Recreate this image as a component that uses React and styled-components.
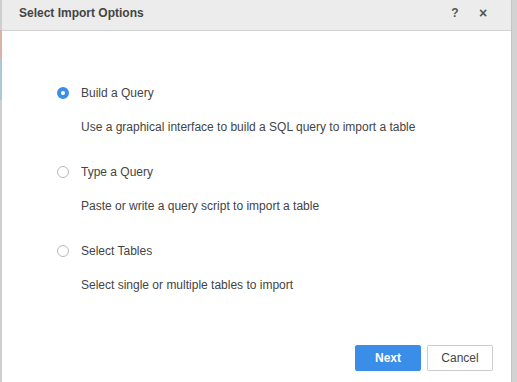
import styled, { createGlobalStyle } from "styled-components"

const Global = createGlobalStyle`
    html, body {
        margin: 0;
        padding: 0;
        background: #d3d3d3;
    }
    body {
        font-family: "Liberation Sans", Arial, sans-serif;
        color: #444;
    }
`

const options = [
    { id: 'build', label: 'Build a Query', desc: 'Use a graphical interface to build a SQL query to import a table', checked: true },
    { id: 'type', label: 'Type a Query', desc: 'Paste or write a query script to import a table' },
    { id: 'tables', label: 'Select Tables', desc: 'Select single or multiple tables to import' },
]

const App = () => {
    return (
        <Page>
            <Global />
            <Edge />
            <Dialog>
                <TitleBar>
                    <Title>Select Import Options</Title>
                    <Tools>
                        <ToolButton>?</ToolButton>
                        <ToolButton $close>×</ToolButton>
                    </Tools>
                </TitleBar>
                <Body>
                    {options.map(o => (
                        <Option key={o.id}>
                            <Row>
                                <Radio $checked={o.checked} />
                                <Label>{o.label}</Label>
                            </Row>
                            <Desc>{o.desc}</Desc>
                        </Option>
                    ))}
                </Body>
                <Footer>
                    <Button $primary>Next</Button>
                    <Button>Cancel</Button>
                </Footer>
            </Dialog>
        </Page>
    )
}

export default App

const Page = styled.div`
    display: flex;
    height: 100vh;
    padding-right: 5px;
    box-sizing: border-box;
`
const Edge = styled.div`
    width: 2px;
    background: linear-gradient(#cfcfcf 0 30px, #d9b3a6 30px 60px, #a9c8dc 60px 100px, #cfcfcf 100px);
`
const Dialog = styled.div`
    flex: 1;
    display: flex;
    flex-direction: column;
    background: #fff;
    border-right: 1px solid #c4c4c4;
`
const TitleBar = styled.div`
    height: 31px;
    box-sizing: border-box;
    display: flex;
    align-items: center;
    justify-content: space-between;
    background: #ececec;
    border-bottom: 1px solid #d2d2d2;
    padding: 0 22px 4px 17px;
    margin-bottom: 1px;
`
const Title = styled.h1`
    margin: 0;
    font-size: 12px;
    font-weight: bold;
    color: #444;
`
const Tools = styled.div`
    display: flex;
    align-items: center;
    gap: 16px;
`
const ToolButton = styled.span`
    font-size: ${p => p.$close ? '14px' : '12px'};
    font-weight: bold;
    color: #555;
    width: 12px;
    text-align: center;
    line-height: 14px;
`
const Body = styled.div`
    padding: 53px 0 0 55px;
    display: flex;
    flex-direction: column;
    gap: 29px;
`
const Option = styled.div`
    display: flex;
    flex-direction: column;
    gap: 18px;
`
const Row = styled.div`
    display: flex;
    align-items: center;
    gap: 12px;
    height: 16px;
`
const Radio = styled.span`
    width: 12px;
    height: 12px;
    border-radius: 50%;
    box-sizing: border-box;
    border: ${p => p.$checked ? '4px solid #3a8ee8' : '1px solid #b8b8b8'};
    background: #fff;
`
const Label = styled.span`
    font-size: 12px;
    line-height: 16px;
    color: #444;
`
const Desc = styled.div`
    font-size: 12px;
    line-height: 16px;
    padding-left: 24px;
    color: #444;
`
const Footer = styled.div`
    margin-top: auto;
    display: flex;
    justify-content: flex-end;
    gap: 6px;
    padding: 0 18px 11px 0;
`
const Button = styled.button`
    width: 66px;
    height: 26px;
    font-family: "Liberation Sans", Arial, sans-serif;
    font-size: 12px;
    font-weight: ${p => p.$primary ? 'bold' : 'normal'};
    color: ${p => p.$primary ? '#fff' : '#444'};
    background: ${p => p.$primary ? '#3a8ee8' : '#fff'};
    border: 1px solid ${p => p.$primary ? '#3a8ee8' : '#cccccc'};
    border-radius: 2px;
    padding: 0;
`
